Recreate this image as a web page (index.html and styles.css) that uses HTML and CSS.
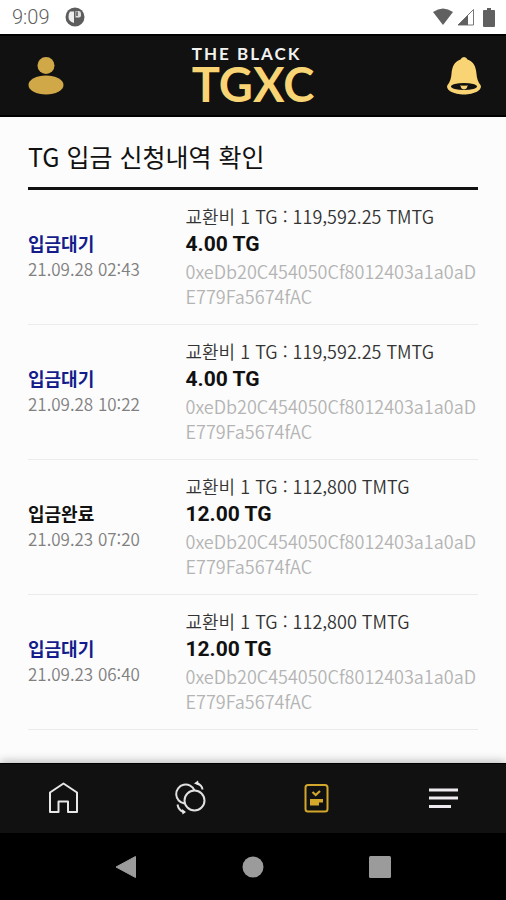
FILE: index.html
```html
<!DOCTYPE html>
<html lang="ko">
<head>
<meta charset="utf-8">
<meta name="viewport" content="width=device-width, initial-scale=1">
<title>TG 입금 신청내역 확인</title>
<link rel="stylesheet" href="styles.css">
</head>
<body>
<div class="status-bar">
  <div class="status-left">
    <span class="clock">9:09</span>
    <svg width="20" height="20" viewBox="0 0 20 20" aria-hidden="true"><circle cx="10" cy="10" r="9.500" fill="#5c5c5c"/><path d="M5 4.500H9V16Q3.500 14.500 3.500 10Q3.500 6.500 5 4.500Z" fill="#eee"/><path d="M10.500 4H14Q16 4 16 6.500V8.500Q16 10.500 14 10.500H10.500Z" fill="#ddd"/><path d="M11 4.500H13V9H11Z" fill="#777"/></svg>
  </div>
  <div class="status-right">
    <svg width="20" height="18" viewBox="0 0 20 18" aria-hidden="true"><path d="M0 4Q10-3 20 4L10 17Z" fill="#606060"/></svg>
    <svg width="18" height="18" viewBox="0 0 18 18" aria-hidden="true"><path d="M1 17L16.500 1.500V17Z" fill="#fff" stroke="#777"/><path d="M1 17L11 7V17Z" fill="#606060"/></svg>
    <svg class="battery" width="12" height="19" viewBox="0 0 12 19" aria-hidden="true"><path d="M4 0H8V2H11Q12 2 12 3V18Q12 19 11 19H1Q0 19 0 18V3Q0 2 1 2H4Z" fill="#606060"/></svg>
  </div>
</div>
<header class="app-header">
  <button class="icon-button" type="button" aria-label="내 정보">
    <svg width="36" height="40" viewBox="0 0 36 40"><circle cx="18" cy="9.500" r="8.500" fill="#d1a848"/><ellipse cx="18" cy="29" rx="17.500" ry="9.500" fill="#d1a848"/></svg>
  </button>
  <a class="logo" href="#"><span class="logo-small">THE BLACK</span><span class="logo-large">TGXC</span></a>
  <button class="icon-button" type="button" aria-label="알림">
    <svg width="36" height="40" viewBox="0 0 36 40"><path d="M18 1Q20.500 1 21.500 3.500C28 6 30 11 30.500 18Q31 25 34.500 29C37 34 28 38.500 18 38.500S-1 34 1.500 29Q5 25 5.500 18C6 11 8 6 14.500 3.500Q15.500 1 18 1Z" fill="#f8d474"/><ellipse cx="18" cy="30.500" rx="13" ry="3.500" fill="#111"/><path d="M14.500 29H21.500Q21.500 33 18 33.500Q14.500 33 14.500 29Z" fill="#f8d474"/><path d="M15 29.500H21" stroke="#6b572a"/></svg>
  </button>
</header>
<main class="content">
  <h1 class="page-title">TG 입금 신청내역 확인</h1>
  <ul class="history">
    <li class="entry">
      <div class="state"><strong class="label pending">입금대기</strong><time class="time">21.09.28 02:43</time></div>
      <div class="detail"><p class="rate">교환비 1 TG : 119,592.25 TMTG</p><p class="amount">4.00 TG</p><p class="address">0xeDb20C454050Cf8012403a1a0aDE779Fa5674fAC</p></div>
    </li>
    <li class="entry">
      <div class="state"><strong class="label pending">입금대기</strong><time class="time">21.09.28 10:22</time></div>
      <div class="detail"><p class="rate">교환비 1 TG : 119,592.25 TMTG</p><p class="amount">4.00 TG</p><p class="address">0xeDb20C454050Cf8012403a1a0aDE779Fa5674fAC</p></div>
    </li>
    <li class="entry">
      <div class="state"><strong class="label">입금완료</strong><time class="time">21.09.23 07:20</time></div>
      <div class="detail"><p class="rate">교환비 1 TG : 112,800 TMTG</p><p class="amount">12.00 TG</p><p class="address">0xeDb20C454050Cf8012403a1a0aDE779Fa5674fAC</p></div>
    </li>
    <li class="entry">
      <div class="state"><strong class="label pending">입금대기</strong><time class="time">21.09.23 06:40</time></div>
      <div class="detail"><p class="rate">교환비 1 TG : 112,800 TMTG</p><p class="amount">12.00 TG</p><p class="address">0xeDb20C454050Cf8012403a1a0aDE779Fa5674fAC</p></div>
    </li>
  </ul>
</main>
<nav class="tab-bar">
  <a class="tab" href="#" aria-label="홈"><svg width="32" height="34" viewBox="0 0 32 34"><path d="M3 31V11.500L16.500 2.500L30 11.500V31H21V20.500H11.500V31Z" fill="none" stroke="#e8e8e8" stroke-width="2" stroke-linejoin="round"/></svg></a>
  <a class="tab" href="#" aria-label="교환"><svg width="32" height="34" viewBox="0 0 32 34"><g fill="none" stroke="#e0e0e0" stroke-width="2"><path d="M10.500 22.500A9.500 9.500 0 1 1 20.500 9.500"/><circle cx="20.500" cy="19.500" r="10"/><path d="M22.500 2Q28 4 28.500 8.500M3.500 23.500Q4.500 29 9.500 31"/></g><path d="M20 2.500L24-.5L25 4.500ZM12 31L8 28L8.500 33.500Z" fill="#e8e8e8"/></svg></a>
  <a class="tab" href="#" aria-label="신청내역" aria-current="page"><svg width="32" height="34" viewBox="0 0 32 34"><rect x="5.500" y="4" width="22" height="26.500" rx="2.500" fill="none" stroke="#d2a72b" stroke-width="2"/><path d="M12.500 11L15.700 14L20 10" fill="none" stroke="#d2a72b" stroke-width="2.200"/><path d="M10 18H23V21.500H19V24.500H10Z" fill="#d2a72b"/></svg></a>
  <a class="tab" href="#" aria-label="메뉴"><svg width="32" height="34" viewBox="0 0 32 34"><path d="M2 9H31M2 17H31M2 25.500H24" stroke="#eeeaf0" stroke-width="3"/></svg></a>
</nav>
<div class="system-bar">
  <button class="system-button" type="button" aria-label="뒤로"><svg width="24" height="24" viewBox="0 0 24 24"><path d="M2 12L21.500 1.500V22.500Z" fill="#9b9b9b" stroke="#9b9b9b" stroke-linejoin="round"/></svg></button>
  <button class="system-button" type="button" aria-label="홈 화면"><svg width="24" height="24" viewBox="0 0 24 24"><circle cx="12" cy="12" r="10.500" fill="#9b9b9b"/></svg></button>
  <button class="system-button" type="button" aria-label="최근 앱"><svg width="24" height="24" viewBox="0 0 24 24"><rect x="1" y="1" width="22" height="22" rx="1.500" fill="#9b9b9b"/></svg></button>
</div>
</body>
</html>
```
FILE: styles.css
```css
* {
  box-sizing: border-box;
}

body {
  display: flex;
  flex-direction: column;
  min-height: 100vh;
  margin: 0;
  background: #fcfcfc;
  color: #111;
  font-family: "Noto Sans CJK KR", "Noto Sans", sans-serif;
}

button {
  padding: 0;
  border: 0;
  background: none;
}

svg {
  display: block;
  overflow: visible;
}

h1,
p,
ul {
  margin: 0;
  padding: 0;
}

.status-bar {
  display: flex;
  align-items: center;
  justify-content: space-between;
  height: 34px;
  padding: 0 11px 0 12px;
  background: #fff;
}

.status-left {
  display: flex;
  align-items: center;
  gap: 16px;
}

.status-right {
  display: flex;
  align-items: center;
  gap: 4px;
}

.battery {
  margin-left: 4px;
}

.clock {
  color: #606060;
  font: 300 20px/24px Roboto, sans-serif;
}

.app-header {
  display: flex;
  align-items: center;
  justify-content: space-between;
  height: 83px;
  padding: 0 24px 0 28px;
  border-top: 2px solid #000;
  border-bottom: 2px solid #000;
  background: #111;
}

.logo {
  display: flex;
  flex-direction: column;
  padding: 0 4px 2px 0;
  font-family: Lato, sans-serif;
  font-weight: 700;
  text-decoration: none;
}

.logo-small {
  color: #f2f2f2;
  font-size: 17px;
  line-height: 18px;
  letter-spacing: 2px;
}

.logo-large {
  color: #f8d474;
  font-size: 47px;
  line-height: 42px;
}

.content {
  flex: 1;
  padding: 17px 28px 33px;
}

.page-title {
  padding: 6px 0 15px;
  border-bottom: 3px solid #111;
  font-size: 25px;
  font-weight: 400;
  line-height: 32px;
}

.history {
  list-style: none;
}

.entry {
  display: grid;
  grid-template-columns: 35% 65%;
  align-items: center;
  padding: 13px 0 15px;
  border-bottom: 1px solid #ebebeb;
}

.state {
  display: flex;
  flex-direction: column;
}

.label {
  font-size: 18px;
  font-weight: 700;
  line-height: 25px;
}

.pending {
  color: #141c8c;
}

.time {
  color: #808080;
  font-size: 17px;
  font-weight: 350;
  line-height: 25px;
}

.rate {
  color: #333;
  font-size: 18px;
  font-weight: 350;
  line-height: 27px;
}

.amount {
  font: 700 21px/29px Roboto, sans-serif;
}

.address {
  color: #b4b4b4;
  font-size: 18px;
  font-weight: 350;
  line-height: 25px;
  overflow-wrap: anywhere;
}

.tab-bar {
  display: grid;
  grid-template-columns: repeat(4, 1fr);
  height: 70px;
  padding-bottom: 2px;
  border-top: 1px solid #000;
  background: #111;
  box-shadow: 0 -2px 9px rgba(0, 0, 0, 0.25);
}

.tab {
  display: flex;
  align-items: center;
  justify-content: center;
}

.system-bar {
  display: grid;
  grid-template-columns: repeat(3, 1fr);
  height: 67px;
  padding: 0 62px;
  background: #000;
}

.system-button {
  display: flex;
  align-items: center;
  justify-content: center;
}
```
